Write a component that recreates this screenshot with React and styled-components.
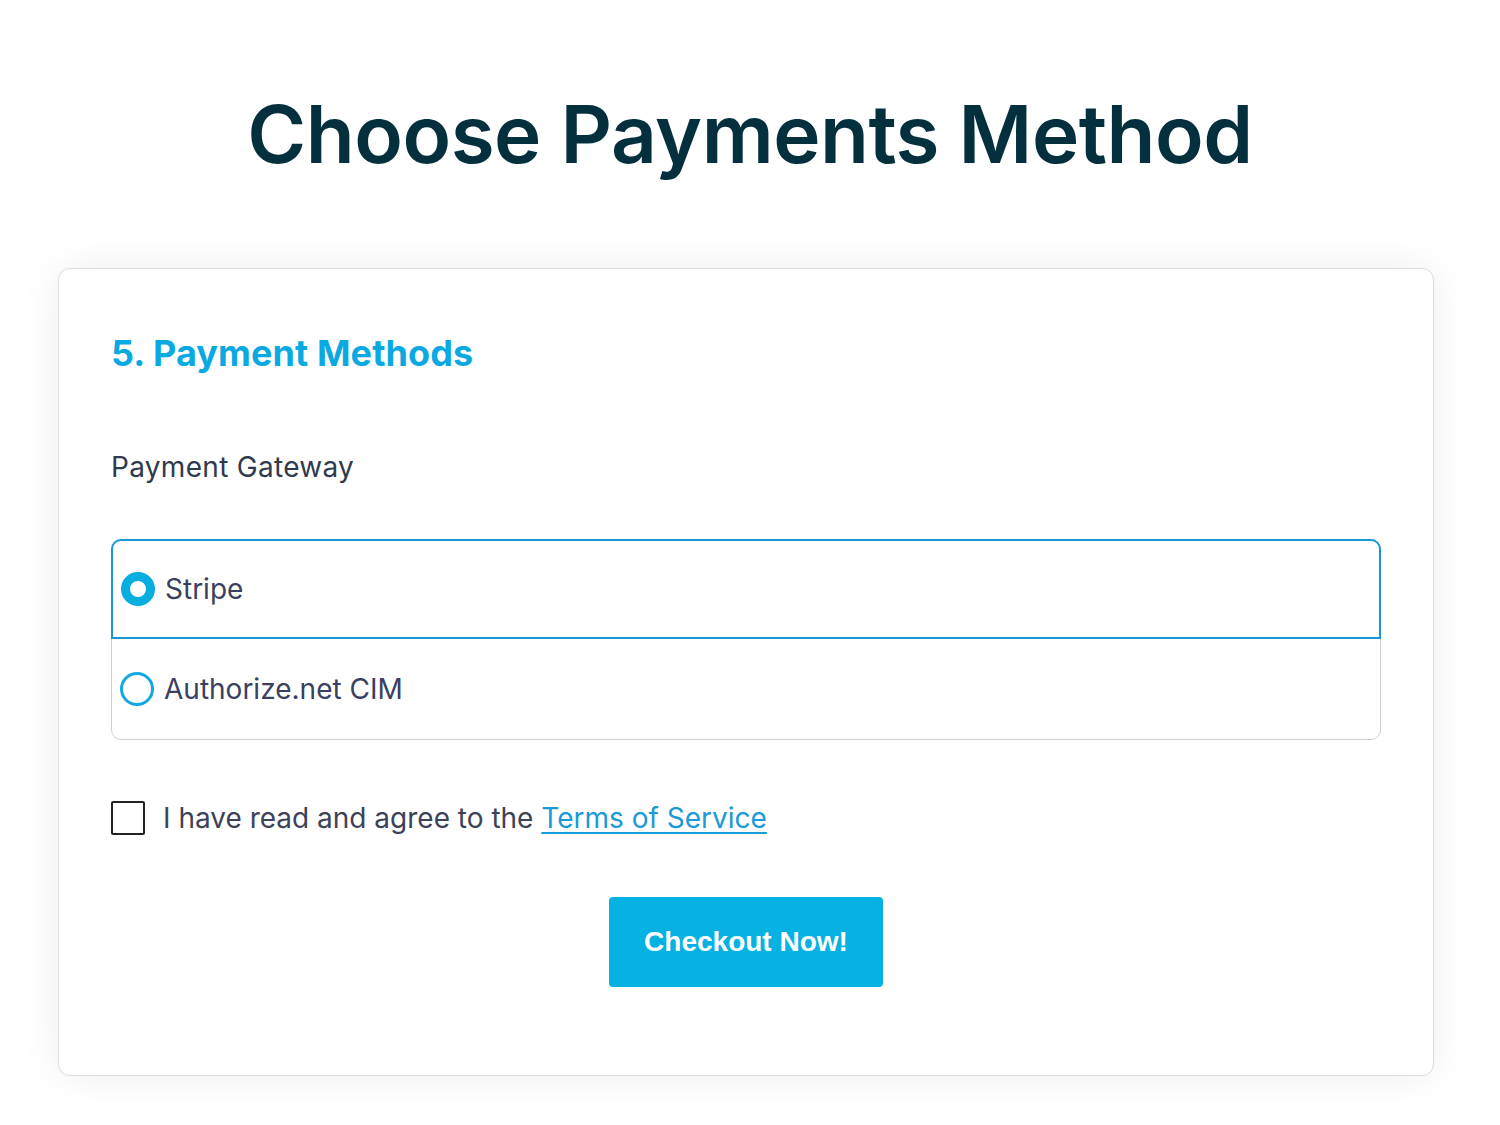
import React, { useState } from "react";
import styled, { createGlobalStyle } from "styled-components";

const GlobalStyle = createGlobalStyle`
  body {
    margin: 0;
    background: #ffffff;
    font-family: Inter, "Noto Sans", sans-serif;
  }
`;

const Page = styled.div`
  width: 1500px;
  padding: 90px 0 50px;
  box-sizing: border-box;
`;

const Title = styled.h1`
  margin: 0 0 90px;
  text-align: center;
  font-family: Inter, "Noto Sans", sans-serif;
  font-weight: 600;
  font-size: 80px;
  letter-spacing: -0.5px;
  line-height: 88px;
  color: #04303e;
`;

const Card = styled.div`
  margin: 0 66px 0 58px;
  padding: 62px 52px 88px;
  border: 1px solid #dcdcdc;
  border-radius: 12px;
  background: #fff;
  box-shadow: 0 0 40px rgba(0, 0, 0, 0.07);
`;

const SectionTitle = styled.h2`
  margin: 0 0 76px;
  font-family: Inter, "Noto Sans", sans-serif;
  font-weight: 700;
  font-size: 36px;
  letter-spacing: 0.1px;
  line-height: 44px;
  color: #0aa9e1;
`;

const FieldLabel = styled.div`
  font-size: 28px;
  letter-spacing: 0.3px;
  line-height: 32px;
  color: #2f3a4d;
  margin-bottom: 56px;
`;

const Options = styled.div`
  border: 1px solid #cfcfcf;
  border-radius: 10px;
`;

const Option = styled.label`
  display: flex;
  align-items: center;
  gap: 10px;
  height: 100px;
  padding: 0 8px;
  box-sizing: border-box;
  cursor: pointer;
  margin: ${(p) => (p.$active ? "-1px -1px 0" : "0")};
  border: ${(p) => (p.$active ? "2px solid #1899d6" : "none")};
  border-radius: ${(p) => (p.$first ? "10px 10px 0 0" : "0 0 10px 10px")};
`;

const Radio = styled.span`
  width: 34px;
  height: 34px;
  border-radius: 50%;
  box-sizing: border-box;
  border: ${(p) => (p.$checked ? "9px solid #08aee0" : "3px solid #12a8e3")};
  flex-shrink: 0;
`;

const OptionText = styled.span`
  font-size: 28px;
  color: #3a4060;
`;

const Agree = styled.div`
  display: flex;
  align-items: center;
  gap: 18px;
  margin-top: 61px;
  font-size: 28px;
  color: #3c4257;
`;

const Box = styled.span`
  width: 34px;
  height: 34px;
  box-sizing: border-box;
  border: 2px solid #222;
  border-radius: 2px;
`;

const TermsLink = styled.a`
  color: #1a9ad8;
  text-decoration: underline;
  text-underline-offset: 4px;
`;

const ButtonRow = styled.div`
  display: flex;
  justify-content: center;
  margin-top: 62px;
`;

const CheckoutButton = styled.button`
  width: 274px;
  height: 90px;
  border: none;
  border-radius: 4px;
  background: #05b2e2;
  color: #fff;
  font-family: "Liberation Sans", Arial, sans-serif;
  font-weight: 700;
  font-size: 28px;
  cursor: pointer;
`;

export default function App() {
  const [method, setMethod] = useState("stripe");
  const options = [
    { id: "stripe", label: "Stripe" },
    { id: "authorize", label: "Authorize.net CIM" },
  ];
  return (
    <>
      <GlobalStyle />
      <Page>
        <Title>Choose Payments Method</Title>
        <Card>
          <SectionTitle>5. Payment Methods</SectionTitle>
          <FieldLabel>Payment Gateway</FieldLabel>
          <Options>
            {options.map((o, i) => (
              <Option
                key={o.id}
                $first={i === 0}
                $active={method === o.id}
                onClick={() => setMethod(o.id)}
              >
                <Radio $checked={method === o.id} />
                <OptionText>{o.label}</OptionText>
              </Option>
            ))}
          </Options>
          <Agree>
            <Box />
            <span>
              I have read and agree to the <TermsLink href="#">Terms of Service</TermsLink>
            </span>
          </Agree>
          <ButtonRow>
            <CheckoutButton>Checkout Now!</CheckoutButton>
          </ButtonRow>
        </Card>
      </Page>
    </>
  );
}
